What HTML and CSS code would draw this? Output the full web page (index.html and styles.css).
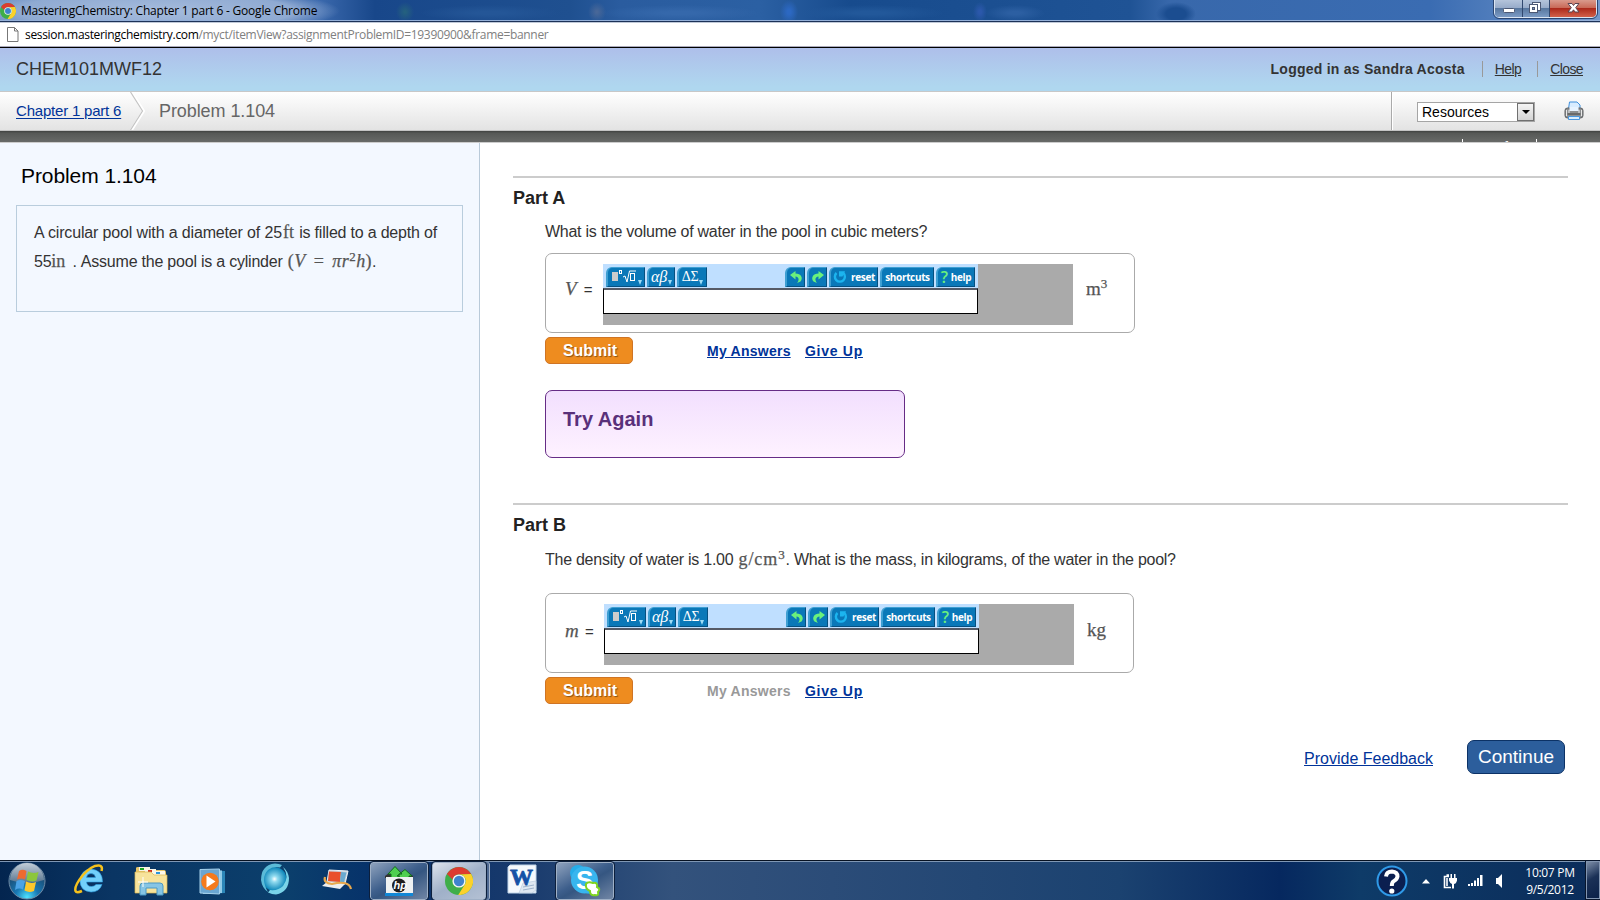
FILE: index.html
```html
<!DOCTYPE html>
<html lang="en">
<head>
<meta charset="utf-8">
<title>MasteringChemistry: Chapter 1 part 6</title>
<link rel="stylesheet" href="styles.css">
</head>
<body>
<svg class="defs" width="0" height="0">
  <defs>
    <symbol id="chrome" viewBox="0 0 28 28">
      <circle cx="14" cy="14" r="14" fill="#3fae49"/>
      <path d="M1.9 7A14 14 0 0 1 26.1 7L14 7.4A6.6 6.6 0 0 0 7.6 12.6Z" fill="#dd3b30"/>
      <path d="M26.1 7A14 14 0 0 1 13.2 28L20 17.200A6.600 6.600 0 0 0 14 7.400Z" fill="#fcd12a"/>
      <circle cx="14" cy="14" r="6.600" fill="#f4f4f4"/>
      <circle cx="14" cy="14" r="5.200" fill="#3f83cd"/>
    </symbol>
    <symbol id="undo" viewBox="0 0 20 20">
      <path d="M16 9L10.500 4V7Q6.500 6.500 4 4.500Q5 9.500 10.500 10.500V13.500Z" fill="#6af07c"/>
    </symbol>
    <symbol id="undo-arrow" viewBox="0 0 20 20">
      <path d="M4 8L9.500 4V6.500C15 6.500 17.500 11 14.500 14.500L11 16C13.500 13 13 10 9.500 9.500V12.500Z" fill="#6af07c"/>
    </symbol>
    <symbol id="reload" viewBox="0 0 14 14">
      <path d="M3.500 3A5 5 0 1 0 10.500 3.200" fill="none" stroke="#1cb4ee" stroke-width="2.400"/>
      <path d="M6 1.200H12L9.500 6.500H6Z" fill="#1cb4ee"/>
    </symbol>
  </defs>
</svg>

<header class="titlebar">
  <svg class="fav" width="16" height="16"><use href="#chrome"/></svg>
  <span class="title">MasteringChemistry: Chapter 1 part 6 - Google Chrome</span>
  <div class="winbtns">
    <span class="wb min"><svg width="27" height="17"><rect x="8.500" y="8.500" width="11" height="4" rx="1" fill="#fff" stroke="#4c5874"/></svg></span>
    <span class="wb max"><svg width="26" height="17"><rect x="9.500" y="2.500" width="8" height="8" fill="#fff" stroke="#4c5874"/><rect x="6.500" y="4.500" width="8" height="8" fill="#fff" stroke="#4c5874"/><rect x="9.500" y="7.500" width="2" height="2" fill="#7f96b8" stroke="#4c5874"/></svg></span>
    <span class="wb cls"><svg width="46" height="17"><path d="M18 3.500h4l1.500 2 1.500-2h4l-3.300 4.200 3.300 4.300h-4l-1.500-2.200-1.500 2.200h-4l3.300-4.300z" fill="#fff" stroke="#5a4450"/></svg></span>
  </div>
</header>
<div class="urlbar">
  <svg width="12" height="16"><path d="M.5.500H7.500L11 4V14.500H.5ZM7.500.500V4H11" fill="#fff" stroke="#777"/></svg>
  <span class="url"><b>session.masteringchemistry.com</b>/myct/itemView?assignmentProblemID=19390900&amp;frame=banner</span>
</div>

<div class="course">
  <span class="course-name">CHEM101MWF12</span>
  <span class="login">Logged in as Sandra Acosta</span>
  <a class="top-link help" href="#">Help</a>
  <a class="top-link close" href="#">Close</a>
</div>
<nav class="crumbs">
  <a class="crumb" href="#">Chapter 1 part 6</a>
  <svg class="chev" width="15" height="38"><path d="M1.500 0L13.500 19L1.500 38" fill="none" stroke="#fff" stroke-width="3"/><path d="M.5 0L12.500 19L.5 38" fill="none" stroke="#c4c4c4" stroke-width="1.200"/></svg>
  <span class="current">Problem 1.104</span>
  <div class="tools">
    <div class="select"><span>Resources</span><i><svg width="8" height="4"><path d="M0 0H8L4 4Z"/></svg></i></div>
    <svg class="printer" width="20" height="20">
      <path d="M4.500 8L5.500 1H13L16 4V8" fill="#d8ecff" stroke="#3f8fdc"/>
      <rect x="1" y="7" width="18" height="10" rx="2.500" fill="#8c8f91" stroke="#5c5f61"/>
      <path d="M2.500 9V15M5 9V12M15 9V12M17.500 9V15" stroke="#e8e8e8"/>
      <rect x="5.500" y="6" width="9" height="4" fill="#e7f3ff"/>
      <path d="M3.500 13H16.500" stroke="#444"/>
      <path d="M4.500 15.500H15.500V18.500H4.500Z" fill="#d9eeff" stroke="#4a97df"/>
    </svg>
  </div>
</nav>
<div class="strip"><span class="pager">10&nbsp; of 17</span></div>

<main class="page">
  <aside class="intro">
    <h1>Problem 1.104</h1>
    <div class="statement">
      <div><span class="s1">A circular pool with a diameter of 25</span><span class="m ft">ft</span><span class="s2"> is filled to a depth of</span></div>
      <div>55<span class="m">in</span><span class="dot"> . </span><span class="s3">Assume the pool is a cylinder </span><span class="m eqn">(<i>V</i> = <i>πr</i><sup>2</sup><i>h</i>)</span>.</div>
    </div>
  </aside>

  <section class="parts">
    <article class="part a">
      <h2>Part A</h2>
      <p class="q">What is the volume of water in the pool in cubic meters?</p>
      <div class="answer">
        <span class="var"><i>V</i> =</span>
        <div class="applet">
          <div class="toolbar">
            <span class="tb t1"><svg width="26" height="18"><rect x="1" y="4" width="6" height="9" fill="#ccc"/><rect x="8.500" y="2.500" width="2" height="3" fill="none" stroke="#fff"/><path d="M12 9L14 8L16 14L18.500 3H25" fill="none" stroke="#fff"/><rect x="19.500" y="5.500" width="4" height="7" fill="none" stroke="#fff"/></svg></span>
            <span class="tb t2 gr">αβ</span>
            <span class="tb t3 gr up">ΔΣ</span>
            <span class="tb un"><svg width="20" height="20"><use href="#undo-arrow"/></svg></span>
            <span class="tb re"><svg width="20" height="20"><use href="#undo-arrow"/></svg></span>
            <span class="tb rs"><svg width="14" height="14"><use href="#reload"/></svg>reset</span>
            <span class="tb sc">shortcuts</span>
            <span class="tb hp"><em>?</em>help</span>
          </div>
          <div class="field"></div>
        </div>
        <span class="unit">m<sup>3</sup></span>
      </div>
      <div class="actions"><span class="submit">Submit</span><a class="mine" href="#">My Answers</a><a class="give" href="#">Give Up</a></div>
      <div class="feedback">Try Again</div>
    </article>

    <article class="part b">
      <h2>Part B</h2>
      <p class="q">The density of water is 1.00 <span class="m dens">g/cm<sup>3</sup></span>. What is the mass, in kilograms, of the water in the pool?</p>
      <div class="answer">
        <span class="var"><i>m</i> =</span>
        <div class="applet">
          <div class="toolbar">
            <span class="tb t1"><svg width="26" height="18"><rect x="1" y="4" width="6" height="9" fill="#ccc"/><rect x="8.500" y="2.500" width="2" height="3" fill="none" stroke="#fff"/><path d="M12 9L14 8L16 14L18.500 3H25" fill="none" stroke="#fff"/><rect x="19.500" y="5.500" width="4" height="7" fill="none" stroke="#fff"/></svg></span>
            <span class="tb t2 gr">αβ</span>
            <span class="tb t3 gr up">ΔΣ</span>
            <span class="tb un"><svg width="20" height="20"><use href="#undo-arrow"/></svg></span>
            <span class="tb re"><svg width="20" height="20"><use href="#undo-arrow"/></svg></span>
            <span class="tb rs"><svg width="14" height="14"><use href="#reload"/></svg>reset</span>
            <span class="tb sc">shortcuts</span>
            <span class="tb hp"><em>?</em>help</span>
          </div>
          <div class="field"></div>
        </div>
        <span class="unit">kg</span>
      </div>
      <div class="actions"><span class="submit">Submit</span><span class="mine off">My Answers</span><a class="give" href="#">Give Up</a></div>
    </article>

    <footer class="next"><a href="#">Provide Feedback</a><span class="continue">Continue</span></footer>
  </section>
</main>

<div class="taskbar">
  <svg class="orb" width="38" height="38" viewBox="0 0 38 38">
    <defs><radialGradient id="og" cx=".5" cy=".95" r=".8"><stop offset="0" stop-color="#4fe3ff"/><stop offset=".4" stop-color="#1878b4"/><stop offset="1" stop-color="#1c4264"/></radialGradient>
    <linearGradient id="os" x2="0" y2="1"><stop offset="0" stop-color="#c4ced8"/><stop offset="1" stop-color="#57748f"/></linearGradient></defs>
    <circle cx="19" cy="19" r="18" fill="url(#og)" stroke="#6f8ba5"/>
    <path d="M2 18A17 17 0 0 1 36 18Q19 24 2 18Z" fill="url(#os)"/>
    <path d="M11 9Q14.500 6.500 18.500 9L17 17.500Q13 15.500 9 17.500Z" fill="#ee6a30"/>
    <path d="M20 9.500Q25 12 30.500 10L28.500 18.500Q24 20.500 18.500 18Z" fill="#8cc63c"/>
    <path d="M8.500 19Q12.500 17 17 19L15 27.500Q11 25.500 7 28Z" fill="#4ba3e6"/>
    <path d="M18 19.500Q23 22 28 20L26 29Q21 31 16.500 28.500Z" fill="#fcc82c"/>
  </svg>
  <svg class="ie" width="32" height="34" viewBox="0 0 32 34">
    <path d="M29.500 20H13.500Q14 24.500 18.500 24.500Q21.500 24.500 23 22.500H29Q26.500 30 18 30Q7 29 7 18.500Q8 7.500 18 7Q29.500 8 29.500 20ZM13.500 15.500H22.500Q22 11.500 18 11.500Q14 11.500 13.500 15.500Z" fill="#72d0fa" stroke="#2f9fe0" stroke-width=".6" fill-rule="evenodd"/>
    <path d="M28.500 9Q30 4 26 3.500Q19 3 10 13Q1 24 2.500 29Q3.500 31.500 9 29" fill="none" stroke="#f5c11c" stroke-width="2.500"/>
  </svg>
  <svg class="explorer" width="34" height="32" viewBox="0 0 34 32">
    <path d="M2 4V3Q2 2 4 2H16V5H30Q32 5 32 8V28H2Z" fill="#e6c569"/>
    <path d="M5 2H16V6H5Z" fill="#f8f4e4"/><rect x="6" y="3" width="4" height="2" fill="#1aa51f"/>
    <path d="M11 4H22V9H11Z" fill="#fbf7e8"/><rect x="14" y="5" width="4" height="2" fill="#cf3422"/>
    <path d="M18 6H31V11H18Z" fill="#fbf7e8"/><rect x="22" y="7" width="4" height="2" fill="#2b95dc"/>
    <path d="M1 7H17L20 10H33V28H1Z" fill="#f7e39b" stroke="#d8b650" stroke-width=".7"/>
    <path d="M6 30V21Q6 18 9 18H26Q29 18 29 21V30H23V23H12V30Z" fill="#86c5e4" stroke="#4a98c4"/>
    <path d="M9 12V22M4 17H14" stroke="#fff"/>
  </svg>
  <svg class="wmp" width="28" height="27" viewBox="0 0 28 27">
    <path d="M6 2L26 3V25L6 26Z" fill="#2b86b8"/><path d="M4 1.500L23 2.500V25L4 26Z" fill="#92cbe7"/><path d="M1 1.500L20.500 1V26L1 25Z" fill="#6aa6d2" stroke="#a8d2ec"/>
    <circle cx="11" cy="13.500" r="8.800" fill="#f47a1d"/><path d="M7.500 7.500L16.500 13.500L7.500 19.500Z" fill="#fff"/>
  </svg>
  <svg class="sphere" width="30" height="32" viewBox="0 0 30 32">
    <defs><radialGradient id="sg"><stop offset="0" stop-color="#fff"/><stop offset=".25" stop-color="#93dcf0"/><stop offset="1" stop-color="#0884b8"/></radialGradient></defs>
    <circle cx="14.500" cy="16" r="12" fill="url(#sg)"/>
    <path d="M15 .5Q1 2 1 17Q2 25 8 29Q0 15 8 7Q13 3 20 4.500L22 2Q19 .5 15 .5Z" fill="#5bbbd8"/>
    <path d="M16 31.500Q29 29 29 15Q28 8 23 4Q30 14 23 23Q18 28 10 27L8 29.500Q12 31.500 16 31.500Z" fill="#7ad4e8"/>
  </svg>
  <svg class="laptop" width="32" height="22" viewBox="0 0 32 22">
    <path d="M8 1L27 2L24 15L6 13Z" fill="#c9d3dc" stroke="#eef2f5"/><path d="M8 2.500L20 3L19 13L7 12Z" fill="#e9502b"/><path d="M20 3L25.500 3.500L23 13.500L19 13Z" fill="#6aa9cf"/>
    <path d="M6 13L24 15L19 20L1 17Z" fill="#eceef0"/>
    <path d="M4 8Q2 14 11 15Q28 11 30 20" fill="none" stroke="#e8a84c" stroke-width="2.200"/>
  </svg>
  <div class="task t-hp">
    <svg width="30" height="32" viewBox="0 0 30 32">
      <path d="M1 11L5 8H25L29 11V13H1Z" fill="#333"/>
      <path d="M4 9L11 1.500L18 9H15V13H7V9ZM13 11L21 4.500L28 11H25V13H15V11Z" fill="#4fcf50" stroke="#116c1b"/>
      <path d="M2 12L29 12V30H2Z" fill="#eef1f2"/><rect x="1" y="28" width="28" height="3" fill="#1187d6"/><circle cx="15" cy="20.500" r="7" fill="#1d1d1f"/>
      <text x="9.500" y="24" class="hp-logo">hp</text>
    </svg>
  </div>
  <div class="task t-chrome"><svg width="28" height="28"><use href="#chrome"/></svg></div>
  <svg class="word" width="30" height="30" viewBox="0 0 30 30">
    <path d="M3 1H29V29H1V3Z" fill="#f5f9fd" stroke="#c1d6ea"/><path d="M16 19L29 17V26L25 29H12Z" fill="#dfe8f2" stroke="#b4c6da" stroke-width=".6"/><path d="M16 23L27 21M16 26L27 24" stroke="#9fb4cc"/>
    <text x="3" y="21" class="word-w" textLength="23" lengthAdjust="spacingAndGlyphs">W</text>
  </svg>
  <div class="task t-skype">
    <svg width="32" height="34" viewBox="0 0 32 34">
      <circle cx="9" cy="9" r="8" fill="#25ace8"/><circle cx="21" cy="22" r="8" fill="#25ace8"/><circle cx="15.500" cy="16" r="13.500" fill="#38b5ee"/>
      <text x="7" y="25" class="skype-s">S</text>
      <path d="M17 20Q19 17 24 19Q29 18 28 23Q32 25 29 28Q30 32 26 31Q21 32 21 27Q16 25 17 20Z" fill="#fff" stroke="#7ed321" stroke-width="2"/>
    </svg>
  </div>
  <div class="tray">
    <svg class="question" width="32" height="32" viewBox="0 0 32 32">
      <circle cx="16" cy="16" r="14.500" fill="#0b1f50" stroke="#2f9ae8" stroke-width="2"/>
      <path d="M10 11.500Q10.500 6.500 16 6.500Q21.500 7 21.500 11.500Q21 14.500 18 16Q15.800 17 15.800 21" fill="none" stroke="#fff" stroke-width="4"/><circle cx="15.800" cy="26" r="2.600" fill="#fff"/>
    </svg>
    <svg class="caret" width="8" height="5"><path d="M0 4.500L4 0L8 4.500Z" fill="#fff"/></svg>
    <svg class="battery" width="14" height="15" viewBox="0 0 14 15"><path d="M8 13.500H1.500V2.500H6M3.500 1H6" fill="none" stroke="#fff" stroke-width="1.600"/><path d="M3 4H5V12H3Z" fill="#ccd4e0"/><path d="M6 4H14V6.500Q13 10 11 10V14.500H9V10Q7 9.500 6 6.500ZM7.500 0H9V4H7.500ZM11 0H12.500V4H11Z" fill="#fff"/></svg>
    <svg class="signal" width="15" height="12"><path d="M0 9H2V11H0ZM3 8H5V11H3ZM6 5.500H8V11H6ZM9 3H11V11H9ZM12 0H14.500V11H12Z" fill="#fff"/></svg>
    <svg class="speaker" width="8" height="14"><path d="M0 4H2L6 0V14L2 10H0Z" fill="#fff"/></svg>
    <div class="clock"><div>10:07 PM</div><div>9/5/2012</div></div>
    <div class="peek"></div>
  </div>
</div>
</body>
</html>
```
FILE: styles.css
```css
* { box-sizing: border-box; }
body { margin: 0; width: 1600px; height: 900px; overflow: hidden; background: #fff; font-family: "Liberation Sans", Arial, sans-serif; color: #333; white-space: nowrap; display: flex; flex-direction: column; }
h1, h2, p { margin: 0; font-weight: normal; }
a { color: #039; }
svg { display: block; flex: none; }
.defs { position: absolute; }

/* window frame */
.titlebar { height: 23px; flex: none; display: flex; align-items: flex-start; border-bottom: 1px solid #c0c9d8; box-shadow: inset 0 -1px #1d3258, inset 0 -2px #93afd8;
  background:
    radial-gradient(ellipse 185px 24px at 155px 11px, #a6bcdd 0, #8faad2 75%, transparent 100%),
    radial-gradient(ellipse 9px 10px at 405px 12px, #24607f 10%, transparent),
    radial-gradient(ellipse 9px 10px at 597px 12px, #486798 10%, transparent),
    radial-gradient(ellipse 9px 12px at 789px 12px, #2c68c2 20%, transparent),
    radial-gradient(ellipse 7px 10px at 980px 12px, #2b58ab 20%, transparent),
    radial-gradient(ellipse 70px 8px at 490px 13px, #245697 20%, transparent),
    radial-gradient(ellipse 80px 8px at 680px 13px, #3568ab 20%, transparent),
    radial-gradient(ellipse 75px 8px at 870px 13px, #22589a 20%, transparent),
    radial-gradient(ellipse 30px 8px at 1015px 13px, #2c5fa2 20%, transparent),
    radial-gradient(ellipse 20px 12px at 1176px 14px, #1b4d90 50%, transparent),
    linear-gradient(90deg, #6c90c4 0, #3a68ac 320px, #18478a 375px, #1f5090 570px, #2a5c9f 620px, #2b60a3 760px, #174b8d 850px, #1f5395 1130px, #3868ab 1170px, #3a6cb2 1430px, #7398cc 1600px); }
.fav { margin: 3px 0 0 0; }
.title { font: 12px/22px "Open Sans", "Noto Sans", sans-serif; color: #000; margin-left: 5px; letter-spacing: -.22px; }
.winbtns { display: flex; margin: 0 3px 0 auto; height: 18px; border: 1px solid #dbe5f2; border-top: 0; border-radius: 0 0 5px 5px; outline: 1px solid #2b4672; overflow: hidden; }
.wb { height: 17px; background: linear-gradient(#b4c4db 0, #98acca 45%, #58779f 50%, #7c9bc5); border-right: 1px solid #31486f; }
.cls { background: linear-gradient(#d99a8c 0, #c96a58 45%, #ac2a1b 50%, #d2604a); border: 0; }
.urlbar { height: 25px; flex: none; display: flex; align-items: flex-start; padding: 4px 0 0 7px; border-bottom: 1px solid #000; box-shadow: inset 0 -1px #aab; }
.url { font: 12px/16px "Open Sans", "Noto Sans", sans-serif; color: #808080; margin: 0 0 0 6px; letter-spacing: -.32px; }
.url b { font-weight: normal; color: #000; }

/* course header */
.course { height: 43px; flex: none; display: flex; align-items: flex-start; background: linear-gradient(#aebfea, #afd7ef 90%); }
.course-name { font-size: 18px; line-height: 22px; margin: 10px auto 0 16px; }
.login { font-size: 14px; font-weight: bold; letter-spacing: .25px; line-height: 18px; margin: 12px 17px 0 0; }
.top-link { font-size: 14px; letter-spacing: -.6px; line-height: 16px; color: #333; border-left: 1px solid #999; margin-top: 13px; padding-left: 12px; text-underline-offset: 1px; }
.help { margin-right: 16px; }
.close { margin-right: 17px; }
.crumbs { height: 40px; flex: none; display: flex; align-items: flex-start; border-top: 1px solid #c8c8c8; border-bottom: 1px solid #c4c4c4; background: linear-gradient(#fff, #e3e3e3); }
.crumb { font-size: 15px; letter-spacing: -.2px; line-height: 18px; margin: 10px 0 0 16px; text-underline-offset: 2px; width: 114px; }
.current { font-size: 18px; line-height: 22px; letter-spacing: -.08px; color: #666; margin: 8px 0 0 14px; }
.tools { margin-left: auto; width: 209px; height: 38px; border-left: 1px solid #aaa; box-shadow: inset 1px 0 #fff; display: flex; align-items: flex-start; }
.select { margin: 10px 0 0 25px; width: 118px; height: 20px; border: 1px solid #a5a5a5; background: #fff; display: flex; justify-content: space-between; font-size: 14px; line-height: 18px; color: #000; padding-left: 4px; }
.select i { width: 17px; height: 18px; border: 1px solid #707070; background: linear-gradient(#f4f4f4, #d4d4d4); display: flex; align-items: center; justify-content: center; }
.printer { margin: 9px 0 0 29px; }
.strip { height: 12px; flex: none; overflow: hidden; border-bottom: 1px solid #ccc; background: linear-gradient(#404240 0, #565856 20%, #686a68); }
.pager { display: block; margin: 8px 0 0 1462px; width: 75px; border: solid #fff; border-width: 0 1px; text-align: center; font-size: 15px; line-height: 16px; color: #fff; }

/* page */
.page { height: 717px; flex: none; display: flex; }
.intro { width: 480px; flex: none; background: #f3f8ff; border-right: 1px solid #b9cad9; padding: 21px 0 0 16px; }
h1 { font-size: 21px; line-height: 24px; letter-spacing: -.08px; color: #000; padding-left: 5px; }
.statement { width: 447px; height: 107px; margin-top: 17px; border: 1px solid #b9cddd; padding: 12px 0 0 17px; font-size: 16px; line-height: 29px; letter-spacing: -.26px; }
.statement > div { height: 29px; }
.s1 { letter-spacing: -.15px; }
.s2 { letter-spacing: -.2px; }
.s3 { letter-spacing: -.22px; }
.dot { margin-left: 3px; }
.m { font-family: "Liberation Serif", serif; font-size: 18px; letter-spacing: 0; color: #555; line-height: 1; -webkit-text-stroke: .25px #555; }
.m sup, .unit sup { font-size: 13px; line-height: 0; vertical-align: 6px; }
.ft { margin: 0 1px; }
.eqn { word-spacing: 3px; letter-spacing: .45px; margin-left: 1px; }
.dens { letter-spacing: .9px; margin-left: 1px; }
.parts { width: 1120px; padding: 33px 32px 0 33px; }
.part { border-top: 2px solid #ccc; }
.a { height: 327px; }
h2 { font-size: 18px; font-weight: bold; line-height: 22px; color: #222; margin-top: 9px; }
.q { font-size: 16px; line-height: 20px; letter-spacing: -.26px; margin: 13px 0 0 32px; }
.answer { width: 590px; height: 80px; margin: 11px 0 0 32px; border: 1px solid #aaa; border-radius: 7px; display: flex; align-items: flex-start; padding: 10px 0 0; }
.var { width: 57px; padding-left: 19px; font-size: 15px; line-height: 24px; margin-top: 13px; }
.var i { font-family: "Liberation Serif", serif; font-size: 19px; color: #555; margin-right: 3px; -webkit-text-stroke: .25px #555; }
.applet { width: 470px; height: 61px; background: #aaa; }
.toolbar { width: 375px; height: 24px; padding: 3px 0 0 3px; background: #bfdfff; display: flex; align-items: flex-start; }
.tb { height: 20px; margin-right: 2px; flex: none; background: #0a78b8; border: solid; border-width: 1px 1px 1px 2px; border-color: #3e9fd2 #065080 #065080 #3e9fd2; border-radius: 6px 0 0 0; color: #fff; font: 700 10px/17px "Open Sans", "Noto Sans", sans-serif; letter-spacing: -.35px; display: flex; align-items: center; justify-content: center; }
.t1 { width: 39px; } .t2 { width: 28px; } .t3 { width: 30px; }
.t1::after, .gr::after { content: ""; align-self: flex-end; margin: 0 0 1px 1px; border: solid transparent; border-width: 5px 2.5px 0; border-top-color: #9fdcf5; }
.gr { font: italic 16px/16px "Liberation Serif", serif; letter-spacing: -.3px; }
.up { font-style: normal; font-size: 14px; }
.un, .re { width: 20px; }
.un svg, .re svg { margin: 0 -2px; }
.un { margin-left: auto; }
.un svg { transform: none; }
.re svg { transform: scaleX(-1); }
.rs { width: 49px; gap: 4px; }
.sc { width: 54px; }
.hp { width: 39px; margin-right: 3px; }
.hp em { font: 600 16px/16px "Open Sans", sans-serif; color: #6af07c; margin-right: 3px; }
.field { width: 375px; height: 26px; background: #fff; border: 1px solid #000; border-top: 2px solid #555a66; }
.unit { font: 19px/24px "Liberation Serif", serif; color: #555; margin: 13px 0 0 13px; -webkit-text-stroke: .25px #555; }
.unit sup { font-size: 13px; vertical-align: 7px; }
.actions { display: flex; align-items: flex-start; margin: 4px 0 0 32px; height: 27px; font-size: 14px; font-weight: bold; line-height: 28px; }
.submit { width: 88px; height: 27px; border: 1px solid #cf7424; border-radius: 5px; background: #ee8c1f; color: #fff; text-align: center; font-size: 16px; line-height: 26px; padding-left: 2px; text-shadow: 1px 1px 1px #8a5010; }
.mine { margin-left: 74px; width: 98px; letter-spacing: .25px; text-underline-offset: 1px; }
.off { color: #999; }
.give { letter-spacing: .72px; text-underline-offset: 1px; }
.feedback { width: 360px; height: 68px; margin: 26px 0 0 32px; border: 1px solid #662c86; border-radius: 7px; background: linear-gradient(#f2dffe, #fef2ff); padding: 16px 0 0 17px; font-size: 20px; line-height: 24px; font-weight: bold; color: #59307a; }
.b .q { margin-top: 14px; }
.b .answer { width: 589px; margin-top: 23px; }
.b .var { width: 58px; margin-top: 15px; }
.b .var i { margin-right: 2px; }
.b .unit { margin-top: 14px; }
.next { display: flex; justify-content: flex-end; margin: 36px 3px 0 0; font-size: 16px; line-height: 37px; }
.continue { width: 98px; height: 34px; margin-left: 34px; border: 1px solid #0c3266; border-radius: 7px; background: #2c5e9c; color: #fff; font-size: 19px; line-height: 32px; text-align: center; }

/* taskbar */
.taskbar { height: 40px; flex: none; display: flex; align-items: flex-start; border-top: 1px solid #071222; box-shadow: inset 0 1px #7f97b4; background: linear-gradient(90deg, #03254f 0, #0a3563 7%, #0b3f6c 18%, #06306a 24%, #17396c 32%, #33527c 42%, #2b4c78 52%, #1b4270 70%, #06285f 80%, #0e3b68 85%, #0b2c5a 100%); }
.orb { margin: 1px 0 0 8px; }
.ie { margin: 1px 0 0 27px; }
.explorer { margin: 4px 0 0 29px; }
.wmp { margin: 7px 0 0 31px; }
.sphere { margin: 2px 0 0 33px; }
.laptop { margin: 8px 0 0 31px; }
.task { height: 38px; margin-top: 1px; border: 1px solid #9fb0c6; border-radius: 3px; outline: 1px solid #0c1f3c; background: linear-gradient(150deg, #8ea2bd, #3e5f8c 45%, #355681 55%, #7186a5); display: flex; align-items: center; justify-content: center; }
.t-hp { width: 58px; margin-left: 17px; }
.t-chrome { width: 54px; margin-left: 4px; background: linear-gradient(150deg, #dde3ec, #9fb0c8 50%, #b4c1d4); box-shadow: 3px 0 #4f6a92, 4px 0 #a5b5cb; }
.word { margin: 3px 0 0 21px; }
.t-skype { width: 58px; margin-left: 19px; }
.hp-logo { font: italic bold 11px "Liberation Sans", sans-serif; fill: #fff; }
.word-w { font: bold 23px "Liberation Serif", serif; fill: #1551a6; stroke: #1551a6; stroke-width: .8px; }
.skype-s { font: bold 26px "Liberation Sans", sans-serif; fill: #fff; }
.tray { margin-left: auto; display: flex; align-items: flex-start; }
.question { margin: 4px 0 0; }
.caret { margin: 18px 0 0 14px; }
.battery { margin: 13px 1px 0 13px; }
.signal { margin: 14px 0 0 10px; }
.speaker { margin: 13px 0 0 13px; }
.clock { width: 72px; margin: 3px 0 0 10px; text-align: center; color: #fff; font: 12px/17px "Open Sans", "Noto Sans", sans-serif; letter-spacing: -.3px; }
.peek { width: 14px; height: 38px; border: 1px solid #8295b0; outline: 1px solid #07152c; background: linear-gradient(150deg, #7d8ea8, #1b3157 45%, #0b2148); }
```
